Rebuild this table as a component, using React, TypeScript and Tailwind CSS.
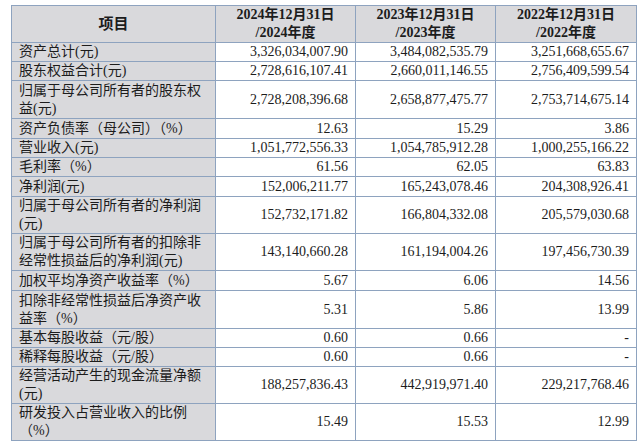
import React from "react";

type Row = { label: React.ReactNode; v: [string, string, string]; h: string };

const rows: Row[] = [
  { label: "资产总计(元)", v: ["3,326,034,007.90", "3,484,082,535.79", "3,251,668,655.67"], h: "h-[19px]" },
  { label: "股东权益合计(元)", v: ["2,728,616,107.41", "2,660,011,146.55", "2,756,409,599.54"], h: "h-[19px]" },
  { label: <>归属于母公司所有者的股东权<br />益(元)</>, v: ["2,728,208,396.68", "2,658,877,475.77", "2,753,714,675.14"], h: "h-[38px]" },
  { label: "资产负债率（母公司）（%）", v: ["12.63", "15.29", "3.86"], h: "h-[20px]" },
  { label: "营业收入(元)", v: ["1,051,772,556.33", "1,054,785,912.28", "1,000,255,166.22"], h: "h-[19px]" },
  { label: "毛利率（%）", v: ["61.56", "62.05", "63.83"], h: "h-[19px]" },
  { label: "净利润(元)", v: ["152,006,211.77", "165,243,078.46", "204,308,926.41"], h: "h-[20px]" },
  { label: <>归属于母公司所有者的净利润<br />(元)</>, v: ["152,732,171.82", "166,804,332.08", "205,579,030.68"], h: "h-[37px]" },
  { label: <>归属于母公司所有者的扣除非<br />经常性损益后的净利润(元)</>, v: ["143,140,660.28", "161,194,004.26", "197,456,730.39"], h: "h-[36px]" },
  { label: "加权平均净资产收益率（%）", v: ["5.67", "6.06", "14.56"], h: "h-[20px]" },
  { label: <>扣除非经常性损益后净资产收<br />益率（%）</>, v: ["5.31", "5.86", "13.99"], h: "h-[38px]" },
  { label: "基本每股收益（元/股）", v: ["0.60", "0.66", "-"], h: "h-[19px]" },
  { label: "稀释每股收益（元/股）", v: ["0.60", "0.66", "-"], h: "h-[19px]" },
  { label: <>经营活动产生的现金流量净额<br />(元)</>, v: ["188,257,836.43", "442,919,971.40", "229,217,768.46"], h: "h-[37px]" },
  { label: <>研发投入占营业收入的比例<br />（%）</>, v: ["15.49", "15.53", "12.99"], h: "h-[37px]" },
];

const font = { fontFamily: '"Liberation Serif", "Noto Sans CJK SC", serif' };

export default function App() {
  return (
    <div className="w-[640px] h-[442px] bg-white overflow-hidden pt-[5px] pl-[11px]" style={font}>
      <table className="table-fixed border-collapse w-[625px] text-[14px] leading-[18px] text-[#1c1c1c]">
        <colgroup>
          <col className="w-[204px]" />
          <col className="w-[140px]" />
          <col className="w-[140px]" />
          <col className="w-[141px]" />
        </colgroup>
        <thead>
          <tr className="h-[37px] bg-[#d9d9dc]">
            <th className="border border-[#8ea3bf] font-bold text-center text-[15px]">项目</th>
            <th className="border border-[#8ea3bf] font-bold text-center">2024年12月31日<br />/2024年度</th>
            <th className="border border-[#8ea3bf] font-bold text-center">2023年12月31日<br />/2023年度</th>
            <th className="border border-[#8ea3bf] font-bold text-center">2022年12月31日<br />/2022年度</th>
          </tr>
        </thead>
        <tbody>
          {rows.map((r, i) => (
            <tr key={i} className={r.h}>
              <td className="border border-[#8ea3bf] bg-[#d9d9dc] pl-[7px] pr-1 whitespace-nowrap align-middle">{r.label}</td>
              {r.v.map((x, j) => (
                <td key={j} className="border border-[#8ea3bf] bg-white text-right pr-[7px] align-middle whitespace-nowrap">{x}</td>
              ))}
            </tr>
          ))}
        </tbody>
      </table>
    </div>
  );
}
